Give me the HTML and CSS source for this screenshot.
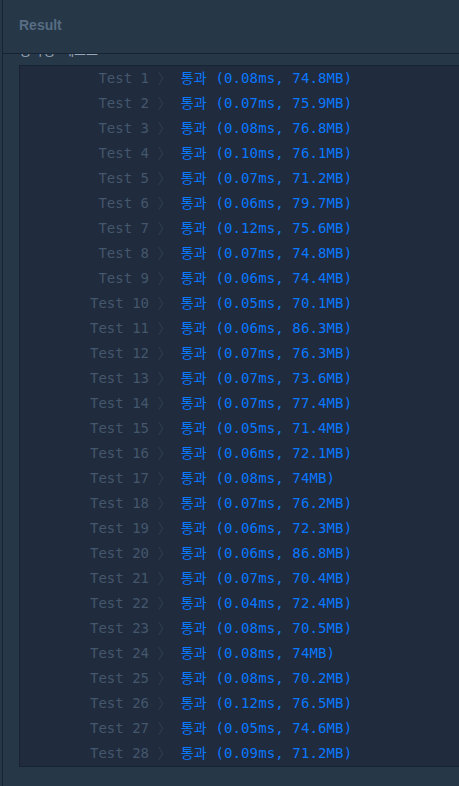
FILE: index.html
```html
<!DOCTYPE html>
<html lang="ko">
<head>
<meta charset="utf-8">
<link rel="stylesheet" href="styles.css">
</head>
<body>
<div class="panel">
  <header class="panel-head"><h2 class="panel-title">Result</h2></header>
  <div class="panel-body">
    <div class="section-title">정확성&nbsp; 테스트</div>
    <div class="console">
      <div class="row"><span class="label">Test 1</span><span class="sep"> 〉 </span><span class="res">통과 (0.08ms, 74.8MB)</span></div>
      <div class="row"><span class="label">Test 2</span><span class="sep"> 〉 </span><span class="res">통과 (0.07ms, 75.9MB)</span></div>
      <div class="row"><span class="label">Test 3</span><span class="sep"> 〉 </span><span class="res">통과 (0.08ms, 76.8MB)</span></div>
      <div class="row"><span class="label">Test 4</span><span class="sep"> 〉 </span><span class="res">통과 (0.10ms, 76.1MB)</span></div>
      <div class="row"><span class="label">Test 5</span><span class="sep"> 〉 </span><span class="res">통과 (0.07ms, 71.2MB)</span></div>
      <div class="row"><span class="label">Test 6</span><span class="sep"> 〉 </span><span class="res">통과 (0.06ms, 79.7MB)</span></div>
      <div class="row"><span class="label">Test 7</span><span class="sep"> 〉 </span><span class="res">통과 (0.12ms, 75.6MB)</span></div>
      <div class="row"><span class="label">Test 8</span><span class="sep"> 〉 </span><span class="res">통과 (0.07ms, 74.8MB)</span></div>
      <div class="row"><span class="label">Test 9</span><span class="sep"> 〉 </span><span class="res">통과 (0.06ms, 74.4MB)</span></div>
      <div class="row"><span class="label">Test 10</span><span class="sep"> 〉 </span><span class="res">통과 (0.05ms, 70.1MB)</span></div>
      <div class="row"><span class="label">Test 11</span><span class="sep"> 〉 </span><span class="res">통과 (0.06ms, 86.3MB)</span></div>
      <div class="row"><span class="label">Test 12</span><span class="sep"> 〉 </span><span class="res">통과 (0.07ms, 76.3MB)</span></div>
      <div class="row"><span class="label">Test 13</span><span class="sep"> 〉 </span><span class="res">통과 (0.07ms, 73.6MB)</span></div>
      <div class="row"><span class="label">Test 14</span><span class="sep"> 〉 </span><span class="res">통과 (0.07ms, 77.4MB)</span></div>
      <div class="row"><span class="label">Test 15</span><span class="sep"> 〉 </span><span class="res">통과 (0.05ms, 71.4MB)</span></div>
      <div class="row"><span class="label">Test 16</span><span class="sep"> 〉 </span><span class="res">통과 (0.06ms, 72.1MB)</span></div>
      <div class="row"><span class="label">Test 17</span><span class="sep"> 〉 </span><span class="res">통과 (0.08ms, 74MB)</span></div>
      <div class="row"><span class="label">Test 18</span><span class="sep"> 〉 </span><span class="res">통과 (0.07ms, 76.2MB)</span></div>
      <div class="row"><span class="label">Test 19</span><span class="sep"> 〉 </span><span class="res">통과 (0.06ms, 72.3MB)</span></div>
      <div class="row"><span class="label">Test 20</span><span class="sep"> 〉 </span><span class="res">통과 (0.06ms, 86.8MB)</span></div>
      <div class="row"><span class="label">Test 21</span><span class="sep"> 〉 </span><span class="res">통과 (0.07ms, 70.4MB)</span></div>
      <div class="row"><span class="label">Test 22</span><span class="sep"> 〉 </span><span class="res">통과 (0.04ms, 72.4MB)</span></div>
      <div class="row"><span class="label">Test 23</span><span class="sep"> 〉 </span><span class="res">통과 (0.08ms, 70.5MB)</span></div>
      <div class="row"><span class="label">Test 24</span><span class="sep"> 〉 </span><span class="res">통과 (0.08ms, 74MB)</span></div>
      <div class="row"><span class="label">Test 25</span><span class="sep"> 〉 </span><span class="res">통과 (0.08ms, 70.2MB)</span></div>
      <div class="row"><span class="label">Test 26</span><span class="sep"> 〉 </span><span class="res">통과 (0.12ms, 76.5MB)</span></div>
      <div class="row"><span class="label">Test 27</span><span class="sep"> 〉 </span><span class="res">통과 (0.05ms, 74.6MB)</span></div>
      <div class="row"><span class="label">Test 28</span><span class="sep"> 〉 </span><span class="res">통과 (0.09ms, 71.2MB)</span></div>
    </div>
  </div>
</div>
</body>
</html>
```

FILE: styles.css
```css
html, body {
  margin: 0;
  padding: 0;
  height: 100%;
  background: #263747;
  overflow: hidden;
}

.panel {
  margin-left: 2px;
  border-left: 1px solid #172334;
  height: 100%;
  display: flex;
  flex-direction: column;
}

.panel-head {
  height: 53px;
  border-bottom: 1px solid #172334;
  display: flex;
  align-items: center;
  padding-left: 16px;
  position: relative;
  z-index: 1;
  background: #263747;
}

.panel-title {
  margin: 0;
  font-family: "Liberation Sans", Arial, sans-serif;
  font-weight: bold;
  font-size: 14px;
  color: #566d83;
  padding-bottom: 3px;
}

.panel-body {
  flex: 1;
  overflow: hidden;
  padding-left: 16px;
}

.section-title {
  margin-top: -14px;
  height: 20px;
  line-height: 20px;
  font-family: "Noto Sans CJK KR", sans-serif;
  font-size: 13px;
  color: #98a8b9;
  white-space: pre;
}

.console {
  margin-top: 5px;
  background: #202b3d;
  border: 1px solid #172334;
  border-right: none;
  font-family: "DejaVu Sans Mono", "Noto Sans CJK KR", monospace;
  font-size: 14px;
}

.row {
  display: flex;
  height: 25px;
  line-height: 25px;
  white-space: pre;
}

.label {
  width: 129px;
  text-align: right;
  color: #44576c;
}

.sep {
  color: #2f3f53;
}

.res {
  margin-left: 1px;
  letter-spacing: 0.12px;
  color: #0a78ff;
}
```
